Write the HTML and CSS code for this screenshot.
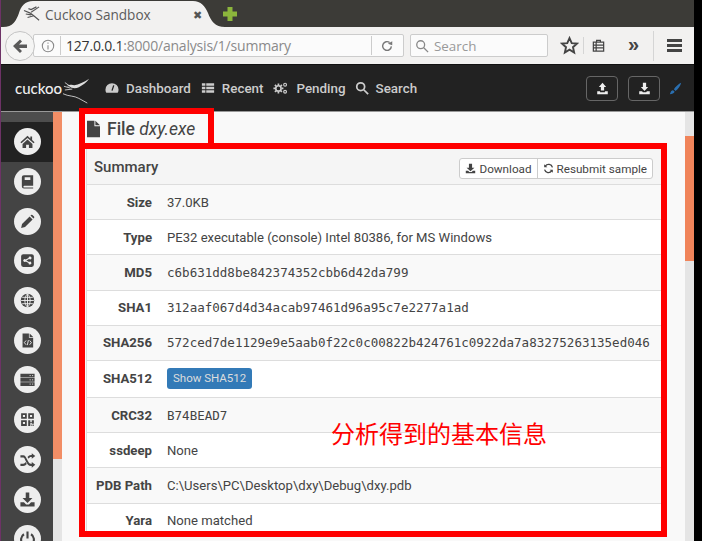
FILE: index.html
```html
<!DOCTYPE html>
<html lang="en">
<head>
  <meta charset="UTF-8" />
  <title>Cuckoo Sandbox</title>
  <link rel="stylesheet" href="styles.css">
</head>
<body>
  <div class="window">
    <!-- browser chrome -->
    <div class="tabbar">
      <div class="tab">
        <svg class="tab-bird" viewBox="0 0 20 18"><path d="M1 5l7 3 4 3 6 5M3 9l6 1M18 1L9 7M15 1l-6 3-3-1M5 13l7-2" /></svg>
        <span class="tab-title">Cuckoo Sandbox</span>
        <span class="tab-close">✖</span>
      </div>
      <svg class="new-tab" viewBox="0 0 16 16"><path d="M5.500 1h5v4.500h4.500v5h-4.500v4.500h-5v-4.500h-4.500v-5h4.500z"/></svg>
    </div>
    <div class="toolbar">
      <div class="back">
        <svg viewBox="0 0 16 16"><path d="M8 1.500l2 2-3 3h8v3.500h-8l3 3-2 2-7-7z"/></svg>
      </div>
      <div class="urlbar">
        <svg class="info" viewBox="0 0 16 16"><circle cx="8" cy="8" r="6.500"/><path d="M8 7v5M8 4v1.500"/></svg>
        <span class="url"><b>127.0.0.1</b>:8000/analysis/1/summary</span>
        <svg class="reload" viewBox="0 0 16 16"><path d="M13 8.500a5 5 0 1 1-2-4.500"/><path class="fill" d="M9 5.500l5-3v4.500z"/></svg>
      </div>
      <div class="searchbar">
        <svg viewBox="0 0 16 16"><circle cx="6.500" cy="6.500" r="4.500"/><path d="M10 10l5 5"/></svg>
        <span>Search</span>
      </div>
      <svg class="tool-star" viewBox="0 0 18 18"><path d="M9 2l2.100 4.700 5 .5-3.800 3.400 1.100 5L9 13l-4.400 2.600 1.100-5L1.900 7.200l5-.5z"/></svg>
      <div class="tool-sep"></div>
      <svg class="tool-clip" viewBox="0 0 16 16"><path d="M2.500 4.500h11v9.500h-11zM2.500 7.500h11M2.500 10.500h11M5.500 4.500v9.500M6 4V2.500h4V4"/></svg>
      <span class="tool-more">»</span>
      <div class="tool-sep tall"></div>
      <div class="burger"><i></i><i></i><i></i></div>
    </div>

    <!-- cuckoo nav -->
    <nav class="nav">
      <a class="logo">
        <span>cuckoo</span>
        <svg viewBox="0 0 30 28"><path class="branch" d="M0 18c6 3 12 2 17 5 3 2 6 3 9 5M2 6l7 5M1 10l7 2M2 14l8-1"/><path d="M4 10c3-2 6-2 8-1 5-1 10-3 16-7-3 4-7 7-11 9-4 2-8 1-10-1z"/></svg>
      </a>
      <a class="nav-link dash">
        <svg viewBox="0 0 16 16"><path class="solid" d="M8 2.500a7.500 7.500 0 0 1 7.500 7.500c0 1.500-.4 2.700-1 3.500h-13c-.6-.8-1-2-1-3.500A7.500 7.500 0 0 1 8 2.500z"/><path class="cut" d="M10 5l-2 6"/></svg>
        <span>Dashboard</span>
      </a>
      <a class="nav-link recent">
        <svg viewBox="0 0 16 16"><path class="solid" d="M1 2.500h4v3h-4zM6 2.500h9v3h-9zM1 6.500h4v3h-4zM6 6.500h9v3h-9zM1 10.500h4v3h-4zM6 10.500h9v3h-9z"/></svg>
        <span>Recent</span>
      </a>
      <a class="nav-link pending">
        <svg viewBox="0 0 18 16"><circle class="ring" cx="6.500" cy="8.500" r="3.200"/><path class="ring" d="M6.500 2.500v2M6.500 12.500v2M.5 8.500h2M10.500 8.500h2M2.300 4.300l1.400 1.400M9.300 11.300l1.400 1.400M2.300 12.700l1.400-1.400M9.300 5.700l1.400-1.400"/><circle class="ring thin" cx="14.500" cy="4" r="1.700"/><circle class="ring thin" cx="14.500" cy="12.500" r="1.700"/></svg>
        <span>Pending</span>
      </a>
      <a class="nav-link find">
        <svg viewBox="0 0 16 16"><circle class="ring" cx="6.500" cy="6.500" r="4.500"/><path class="ring" d="M10 10l5 5"/></svg>
        <span>Search</span>
      </a>
      <div class="nav-right">
        <a class="nav-btn"><svg viewBox="0 0 16 16"><path class="solid" d="M8 1l4.500 5H10v4.500H6V6H3.500zM1.500 11.500H5v1h6v-1h3.500V15h-13z"/></svg></a>
        <a class="nav-btn"><svg viewBox="0 0 16 16"><path class="solid" d="M6 1h4v5h2.500L8 11 3.500 6H6zM1.500 11.500H5l1 1h4l1-1h3.500V15h-13z"/></svg></a>
        <svg class="brush" viewBox="0 0 16 16"><path d="M15 1c-3 1-7 5-9 8l2 2c3-2 6-6 7-10zM5 10c-2 0-3 2-4 5 3 0 5-1 6-3z"/></svg>
      </div>
    </nav>

    <div class="body">
      <aside class="sidebar">
        <div class="side-top"></div>
        <a class="side-item active"><span class="circle"><svg viewBox="0 0 24 24"><path d="M12 4L2 13l1.500 1.500L12 7l8.500 7.500L22 13l-3.500-3.100V5H16v2.700zM5 15.500l7-6.200 7 6.200V21h-5v-4.500h-4V21H5z"/></svg></span></a>
        <a class="side-item"><span class="circle"><svg viewBox="0 0 24 24"><path fill-rule="evenodd" d="M7 3h13v15H7.500a1 1 0 0 0 0 2.500H20V22H7a3 3 0 0 1-3-3V6a3 3 0 0 1 3-3zM8 6v4h8V6z"/></svg></span></a>
        <a class="side-item"><span class="circle"><svg viewBox="0 0 24 24"><path d="M3 21l1.300-5.500L15 4.800l4.200 4.200L8.500 19.700zM16.200 3.600l.8-.8a1.500 1.500 0 0 1 2 0l2.200 2.200a1.500 1.500 0 0 1 0 2l-.8.800z"/></svg></span></a>
        <a class="side-item"><span class="circle"><svg viewBox="0 0 24 24"><path fill-rule="evenodd" d="M6 3h12a3 3 0 0 1 3 3v12a3 3 0 0 1-3 3H6a3 3 0 0 1-3-3V6a3 3 0 0 1 3-3zM15.500 6.500a2 2 0 0 0-2 2l-4 2.200a2 2 0 1 0 0 2.600l4 2.200a2 2 0 1 0 .7-1.300l-3.900-2.100v-.2l3.900-2.100a2 2 0 1 0 1.300-3.300z"/></svg></span></a>
        <a class="side-item"><span class="circle"><svg viewBox="0 0 24 24"><circle cx="12" cy="12" r="9.500"/><path class="cut" d="M3 12h18M4.500 7.500h15M4.500 16.500h15M12 2.500v19M12 2.500c-5 5-5 14 0 19M12 2.500c5 5 5 14 0 19"/></svg></span></a>
        <a class="side-item"><span class="circle"><svg viewBox="0 0 24 24"><path d="M5 2h9v6h6v14H5zM15 2l5 5h-5z"/><path class="cut" d="M10 12l-2.500 3 2.500 3M15 12l2.500 3-2.500 3M13.300 11.500l-1.600 7"/></svg></span></a>
        <a class="side-item"><span class="circle"><svg viewBox="0 0 24 24"><path d="M2 4h20v5H2zM2 10h20v5H2zM2 16h20v5H2z"/><path class="cut" d="M15 6.500h1.500M18.500 6.500H20M15 12.500h1.500M18.500 12.500H20M15 18.500h1.500M18.500 18.500H20"/></svg></span></a>
        <a class="side-item"><span class="circle"><svg viewBox="0 0 24 24"><path fill-rule="evenodd" d="M3 3h8v8H3zM5.500 5.500v3h3v-3zM13 3h8v8h-8zM15.500 5.500v3h3v-3zM3 13h8v8H3zM5.500 15.500v3h3v-3zM13 13h3v3h2v-3h3v5h-3v-1h-2v4h-3zM17.500 19h1.500v2h-1.500zM20 19h1v2h-1z"/></svg></span></a>
        <a class="side-item"><span class="circle"><svg viewBox="0 0 24 24"><path d="M2 6h4c5 0 6 12 11 12h1v-2.500l5 4-5 4V21h-1c-7 0-8-12-11-12H2zM2 18h4c1.500 0 2.500-1 3.300-2.300l1.700 2.500C9.500 20 8 21 6 21H2zM18 3l5 4-5 4V8.500h-1c-1.500 0-2.500 1-3.300 2.300L12 8.300C13.500 6.500 15 5.500 17 5.500h1z"/></svg></span></a>
        <a class="side-item"><span class="circle"><svg viewBox="0 0 24 24"><path d="M9.500 2h5v8h4.500L12 17 5 10h4.500zM2 16h5l3 3h4l3-3h5v6H2z"/></svg></span></a>
        <a class="side-item"><span class="circle"><svg viewBox="0 0 24 24"><path class="ring-side" d="M7 6a9 9 0 1 0 10 0M12 2v10"/></svg></span></a>
      </aside>

      <div class="side-strip"><div class="strip-fill"></div></div>

      <main class="main">
        <h3 class="page-title">
          <svg viewBox="0 0 14 18"><path d="M0 0h8v6h6v12H0zM9 0l5 5H9z"/></svg>
          <span>File <em>dxy.exe</em></span>
        </h3>
        <div class="marked">
          <div class="panel">
            <div class="panel-head">
              <span class="panel-title">Summary</span>
              <div class="btn-group">
                <a class="btn"><svg viewBox="0 0 14 14"><path d="M5 1h4v5h3L7 10.500 2 6h3zM1 10h3l1.500 1.500h3L10 10h3v3H1z"/></svg>Download</a>
                <a class="btn"><svg viewBox="0 0 14 14"><path class="arrows" d="M12 5.500A5 5 0 0 0 3 4M2 8.500A5 5 0 0 0 11 10"/><path d="M1.500 1.500l4 4h-4zM12.500 12.500l-4-4h4z"/></svg>Resubmit sample</a>
              </div>
            </div>
            <div class="row odd"><div class="key">Size</div><div class="val">37.0KB</div></div>
            <div class="row"><div class="key">Type</div><div class="val">PE32 executable (console) Intel 80386, for MS Windows</div></div>
            <div class="row odd"><div class="key">MD5</div><div class="val mono">c6b631dd8be842374352cbb6d42da799</div></div>
            <div class="row"><div class="key">SHA1</div><div class="val mono">312aaf067d4d34acab97461d96a95c7e2277a1ad</div></div>
            <div class="row odd"><div class="key">SHA256</div><div class="val mono">572ced7de1129e9e5aab0f22c0c00822b424761c0922da7a83275263135ed046</div></div>
            <div class="row tall"><div class="key">SHA512</div><div class="val"><a class="btn-show">Show SHA512</a></div></div>
            <div class="row odd"><div class="key">CRC32</div><div class="val mono">B74BEAD7</div></div>
            <div class="row"><div class="key">ssdeep</div><div class="val">None</div></div>
            <div class="row odd"><div class="key">PDB Path</div><div class="val">C:\Users\PC\Desktop\dxy\Debug\dxy.pdb</div></div>
            <div class="row"><div class="key">Yara</div><div class="val">None matched</div></div>
          </div>
          <div class="note">分析得到的基本信息</div>
        </div>
      </main>

      <div class="scrollbar"><div class="scroll-thumb"></div></div>
    </div>
  </div>
</body>
</html>
```

FILE: styles.css
```css
html, body {
  margin: 0;
  height: 541px;
  overflow: hidden;
  background: #000;
}
body {
  font-family: Roboto, sans-serif;
  color: #444;
}
a {
  text-decoration: none;
}
.window {
  width: 693px;
  height: 541px;
  margin-right: 8px;
  border-left: 1px solid #6d3266;
  display: flex;
  flex-direction: column;
  overflow: hidden;
}

/* tabs */
.tabbar {
  height: 27px;
  flex: none;
  background: #3c3b37;
  display: flex;
  align-items: flex-end;
  padding-left: 2px;
}
.tab {
  width: 222px;
  height: 26px;
  background: #f2f1f0;
  clip-path: path('M0 26C10 26 13 20 16 12C18 5 22 0 30 0L190 0C198 0 202 5 205 12C208 20 212 26 222 26Z');
  display: flex;
  align-items: center;
  padding-left: 20px;
  box-sizing: border-box;
  font-family: "Open Sans", sans-serif;
  font-size: 13.600px;
  color: #5c5c5c;
}
.tab-bird {
  width: 18px;
  height: 16px;
  fill: none;
  stroke: #555;
  stroke-width: 1.300;
  flex: none;
}
.tab-title {
  margin-left: 4px;
  width: 148px;
}
.tab-close {
  font-size: 11px;
  color: #555;
}
.new-tab {
  width: 16px;
  height: 16px;
  fill: #8cb63c;
  margin: 0 0 5px -3px;
}

/* browser toolbar */
.toolbar {
  height: 38px;
  flex: none;
  box-sizing: border-box;
  background: #f2f1f0;
  border-bottom: 1px solid #111;
  display: flex;
  align-items: center;
  padding-left: 4px;
}
.back {
  width: 28px;
  height: 28px;
  border-radius: 50%;
  border: 1px solid #c4c4c4;
  background: #f5f5f4;
  display: flex;
  align-items: center;
  justify-content: center;
  flex: none;
  position: relative;
  z-index: 1;
  margin-right: -2px;
}
.back svg {
  width: 16px;
  height: 16px;
  fill: #5a5a5a;
}
.urlbar, .searchbar {
  height: 23px;
  box-sizing: border-box;
  border: 1px solid #ccc;
  border-radius: 2px;
  background: #fbfbfb;
  display: flex;
  align-items: center;
  font-family: "Open Sans", sans-serif;
  font-size: 14px;
  color: #8a8a8a;
}
.urlbar {
  width: 371px;
  padding-left: 7px;
}
.info {
  width: 14px;
  height: 14px;
  fill: none;
  stroke: #888;
  stroke-width: 1.200;
  flex: none;
}
.url {
  margin-left: 5px;
  padding-left: 5px;
  border-left: 1px solid #ccc;
  width: 312px;
  flex: none;
  box-sizing: border-box;
  letter-spacing: -0.2px;
  white-space: nowrap;
  border-right: 1px solid #ccc;
}
.url b {
  font-weight: normal;
  color: #333;
}
.reload {
  width: 14px;
  height: 14px;
  fill: none;
  stroke: #777;
  stroke-width: 1.600;
  flex: none;
  margin-left: 8px;
}
.reload .fill {
  fill: #777;
  stroke: none;
}
.searchbar {
  width: 138px;
  margin-left: 6px;
  padding-left: 4px;
  color: #999;
  font-size: 13.400px;
}
.searchbar svg {
  width: 14px;
  height: 14px;
  fill: none;
  stroke: #888;
  stroke-width: 1.500;
  margin-right: 5px;
}
.tool-star {
  width: 19px;
  height: 19px;
  fill: none;
  stroke: #444;
  stroke-width: 1.800;
  margin-left: 12px;
}
.tool-sep {
  width: 1px;
  height: 17px;
  background: #d5d5d5;
  margin-left: 4px;
}
.tool-clip {
  width: 15px;
  height: 15px;
  fill: none;
  stroke: #444;
  stroke-width: 1.300;
  margin-left: 7px;
}
.tool-more {
  font-family: "Liberation Sans", sans-serif;
  font-size: 20px;
  font-weight: bold;
  line-height: 20px;
  margin: -3px 0 0 22px;
  color: #444;
}
.tool-sep.tall {
  height: 30px;
  margin-left: 14px;
}
.burger {
  width: 15px;
  margin-left: 13px;
}
.burger i {
  display: block;
  height: 3px;
  background: #444;
  margin: 2px 0;
}

/* site nav */
.nav {
  height: 47px;
  flex: none;
  box-sizing: border-box;
  background: #222;
  border-bottom: 1px solid #999;
  display: flex;
  align-items: center;
  padding-left: 14px;
  color: #ccc;
  font-size: 13.400px;
  font-weight: 500;
}
.logo {
  display: flex;
  align-items: center;
  width: 90px;
  color: #eee;
  font-family: Lato, sans-serif;
  font-size: 15px;
}
.logo svg {
  width: 28px;
  height: 28px;
  fill: #ddd;
  margin: 4px 0 0 1px;
}
.logo .branch {
  fill: none;
  stroke: #ccc;
  stroke-width: 1;
}
.nav-link {
  display: flex;
  align-items: center;
  color: #ccc;
}
.nav-link svg {
  width: 14px;
  height: 14px;
  margin-right: 7px;
}
.nav-link .solid, .nav-btn .solid {
  fill: #ccc;
}
.nav-link .cut {
  stroke: #222;
  stroke-width: 1.500;
  fill: none;
}
.nav-link .ring {
  fill: none;
  stroke: #ccc;
  stroke-width: 2;
}
.nav-link .thin {
  stroke-width: 1.400;
}
.recent {
  margin-left: 10px;
}
.pending {
  margin-left: 10px;
}
.pending svg {
  width: 15px;
  margin-right: 8px;
}
.find {
  margin-left: 9px;
}
.nav-right {
  margin-left: auto;
  display: flex;
  align-items: center;
  padding-right: 12px;
}
.nav-btn {
  width: 32px;
  height: 25px;
  box-sizing: border-box;
  border: 1px solid #666;
  border-radius: 4px;
  display: flex;
  align-items: center;
  justify-content: center;
  margin-right: 10px;
}
.nav-btn svg {
  width: 13px;
  height: 13px;
}
.nav-btn .solid {
  fill: #eee;
}
.brush {
  width: 13px;
  height: 13px;
  fill: #2a6fb0;
  margin-left: -1px;
}

/* page */
.body {
  flex: 1;
  display: flex;
  min-height: 0;
}
.sidebar {
  width: 52px;
  flex: none;
  background: #444;
}
.side-top {
  height: 10px;
  background: #4d4d4d;
}
.side-item {
  height: 39.700px;
  display: flex;
  align-items: center;
  justify-content: center;
}
.side-item.active {
  background: #222;
}
.circle {
  width: 27px;
  height: 27px;
  border-radius: 50%;
  background: #eee;
  display: flex;
  align-items: center;
  justify-content: center;
  flex: none;
}
.circle svg {
  width: 17px;
  height: 17px;
  fill: #444;
}
.circle .cut {
  fill: none;
  stroke: #eee;
  stroke-width: 1.300;
}
.circle .ring-side {
  fill: none;
  stroke: #444;
  stroke-width: 3;
}
.side-strip {
  width: 9px;
  flex: none;
  background: #e5e5e5;
}
.strip-fill {
  height: 347px;
  background: #f28e66;
}
.main {
  flex: 1;
  min-width: 0;
  background: #f9f9f9;
  padding-left: 17px;
}
.page-title {
  box-sizing: border-box;
  width: 135px;
  height: 35px;
  margin: -4px 0 0;
  border: 6px solid #f00;
  border-bottom: 0;
  display: flex;
  align-items: center;
  font-size: 17.500px;
  font-weight: 500;
  color: #444;
  white-space: nowrap;
}
.page-title svg {
  width: 13px;
  height: 18px;
  flex: none;
  fill: #444;
  margin: 0 7px 0 2px;
}
.page-title em {
  font-weight: 400;
}
.marked {
  position: relative;
  box-sizing: border-box;
  width: 588px;
  height: 394px;
  border: 6px solid #f00;
  overflow: hidden;
}
.panel {
  border-left: 1px solid #ddd;
  margin-left: 1px;
  font-size: 13.100px;
}
.panel-head {
  height: 36px;
  box-sizing: border-box;
  background: #f5f5f5;
  border-bottom: 1px solid #ddd;
  display: flex;
  align-items: center;
  justify-content: space-between;
  padding: 0 8px 0 7px;
}
.panel-title {
  font-size: 15px;
  font-weight: 500;
}
.btn-group {
  display: flex;
  background: #fff;
  border: 1px solid #ccc;
  border-radius: 3px;
  height: 21px;
  box-sizing: border-box;
  margin-top: 4px;
}
.btn {
  display: flex;
  align-items: center;
  font-size: 11.700px;
  color: #444;
  padding: 0 5px;
  white-space: nowrap;
}
.btn + .btn {
  border-left: 1px solid #ccc;
}
.btn svg {
  width: 11px;
  height: 11px;
  fill: #444;
  margin-right: 3px;
  flex: none;
}
.btn .arrows {
  fill: none;
  stroke: #444;
  stroke-width: 1.700;
}
.row {
  height: 35.200px;
  box-sizing: border-box;
  background: #fff;
  border-bottom: 1px solid #ddd;
  display: flex;
  align-items: center;
}
.row.odd {
  background: #f9f9f9;
}
.row.tall {
  height: 37px;
}
.key {
  width: 65px;
  flex: none;
  text-align: right;
  font-weight: 700;
  font-size: 13.200px;
}
.val {
  margin-left: 15px;
  white-space: nowrap;
}
.mono {
  font-family: "DejaVu Sans Mono", monospace;
  font-size: 12.540px;
}
.btn-show {
  display: block;
  background: #337ab7;
  border-radius: 3px;
  color: #ddd;
  font-size: 11.500px;
  padding: 3px 6px;
  line-height: 15px;
}
.note {
  position: absolute;
  left: 246px;
  top: 269px;
  font-family: "Noto Sans CJK SC", serif;
  font-size: 24px;
  line-height: 30px;
  color: #f00;
  white-space: nowrap;
}
.scrollbar {
  width: 9px;
  flex: none;
  background: #e5e5e5;
}
.scroll-thumb {
  height: 125px;
  margin-top: 24px;
  background: #f0845a;
}
```
